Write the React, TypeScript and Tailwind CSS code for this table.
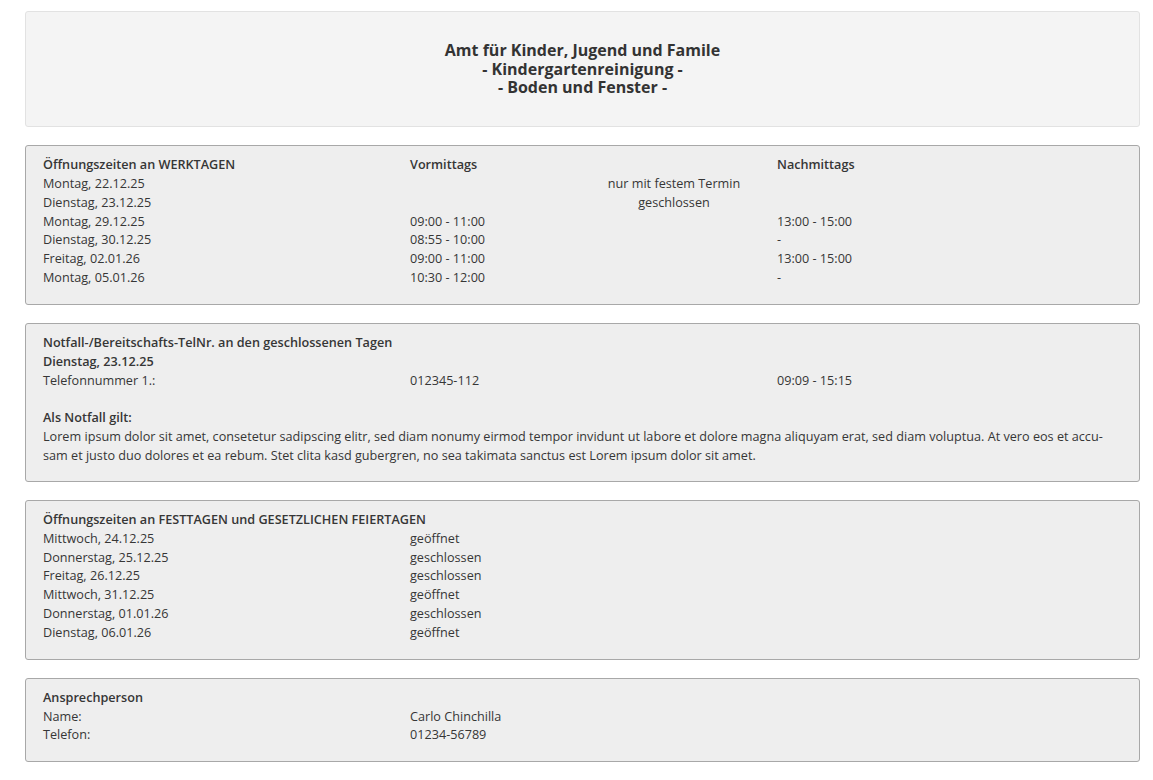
import React from 'react'

const werktage = [
  ['Montag, 22.12.25', 'nur mit festem Termin', null],
  ['Dienstag, 23.12.25', 'geschlossen', null],
  ['Montag, 29.12.25', '09:00 - 11:00', '13:00 - 15:00'],
  ['Dienstag, 30.12.25', '08:55 - 10:00', '-'],
  ['Freitag, 02.01.26', '09:00 - 11:00', '13:00 - 15:00'],
  ['Montag, 05.01.26', '10:30 - 12:00', '-'],
]

const feiertage = [
  ['Mittwoch, 24.12.25', 'geöffnet'],
  ['Donnerstag, 25.12.25', 'geschlossen'],
  ['Freitag, 26.12.25', 'geschlossen'],
  ['Mittwoch, 31.12.25', 'geöffnet'],
  ['Donnerstag, 01.01.26', 'geschlossen'],
  ['Dienstag, 06.01.26', 'geöffnet'],
]

function Panel({ children, tight }: { children: React.ReactNode; tight?: boolean }) {
  return (
    <div
      className={
        'border border-[#a8a8a8] bg-[#eeeeee] rounded-[3px] pl-[17px] pt-[9px] leading-[18.85px] ' +
        (tight ? 'pb-[16px]' : 'pb-[17px]')
      }
    >
      {children}
    </div>
  )
}

const row = 'grid grid-cols-[367px_367px_367px]'

export default function App() {
  return (
    <div
      className="bg-white pt-[11px] pb-2 text-[12.65px] text-[#363636]"
      style={{ fontFamily: '"Open Sans", "Noto Sans", sans-serif' }}
    >
      <div className="ml-[25px] w-[1115px]">
        <div className="border border-[#e2e2e2] bg-[#f4f4f4] rounded-[3px] h-[116px] flex flex-col items-center justify-center text-[16px] leading-[18.5px] font-bold text-[#333]">
          <div>Amt für Kinder, Jugend und Famile</div>
          <div>- Kindergartenreinigung -</div>
          <div>- Boden und Fenster -</div>
        </div>

        <div className="mt-[18px] flex flex-col gap-[18px]">
          <Panel>
            <div className={row + ' font-semibold'}>
              <div>Öffnungszeiten an WERKTAGEN</div>
              <div>Vormittags</div>
              <div>Nachmittags</div>
            </div>
            {werktage.map(([d, v, n]) => (
              <div key={d} className={row}>
                <div>{d}</div>
                {n === null ? (
                  <div className="col-span-2 w-[528px] text-center">{v}</div>
                ) : (
                  <>
                    <div>{v}</div>
                    <div>{n}</div>
                  </>
                )}
              </div>
            ))}
          </Panel>

          <Panel tight>
            <div className="font-semibold">Notfall-/Bereitschafts-TelNr. an den geschlossenen Tagen</div>
            <div className="font-semibold">Dienstag, 23.12.25</div>
            <div className={row}>
              <div>Telefonnummer 1.:</div>
              <div>012345-112</div>
              <div>09:09 - 15:15</div>
            </div>
            <div className="h-[18.85px]" />
            <div className="font-semibold">Als Notfall gilt:</div>
            <div className="whitespace-nowrap">
              Lorem ipsum dolor sit amet, consetetur sadipscing elitr, sed diam nonumy eirmod tempor invidunt ut labore et dolore magna aliquyam erat, sed diam voluptua. At vero eos et accu-
            </div>
            <div className="whitespace-nowrap">
              sam et justo duo dolores et ea rebum. Stet clita kasd gubergren, no sea takimata sanctus est Lorem ipsum dolor sit amet.
            </div>
          </Panel>

          <Panel>
            <div className="font-semibold">Öffnungszeiten an FESTTAGEN und GESETZLICHEN FEIERTAGEN</div>
            {feiertage.map(([d, s]) => (
              <div key={d} className={row}>
                <div>{d}</div>
                <div>{s}</div>
              </div>
            ))}
          </Panel>

          <Panel>
            <div className="font-semibold">Ansprechperson</div>
            <div className={row}>
              <div>Name:</div>
              <div>Carlo Chinchilla</div>
            </div>
            <div className={row}>
              <div>Telefon:</div>
              <div>01234-56789</div>
            </div>
          </Panel>
        </div>
      </div>
    </div>
  )
}
